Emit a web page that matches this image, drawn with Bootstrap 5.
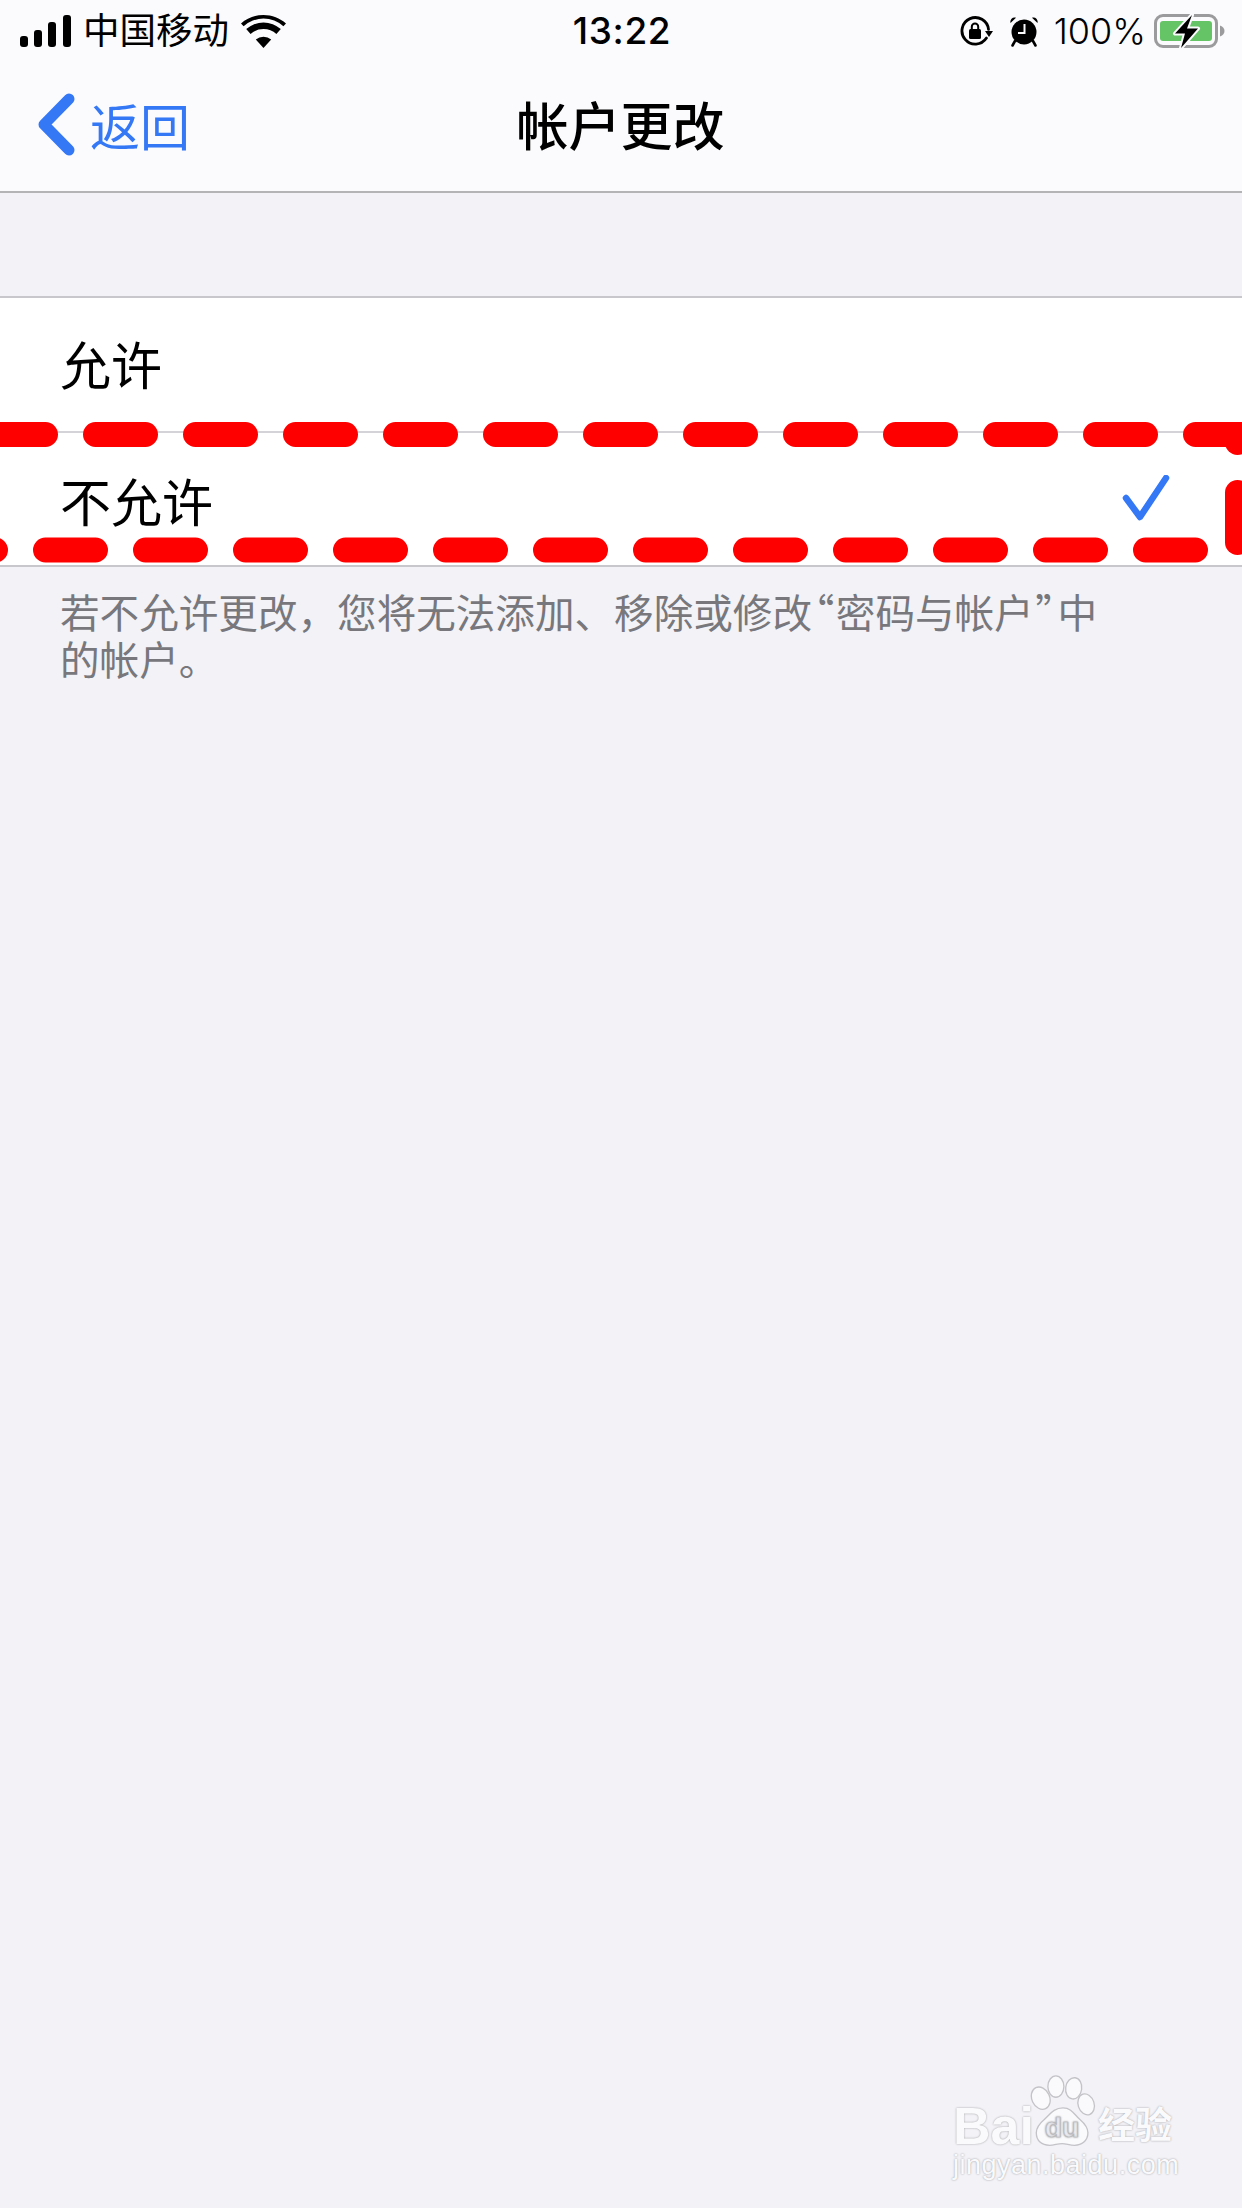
<!DOCTYPE html>
<html lang="zh-CN">
<head>
<meta charset="utf-8">
<title>帐户更改</title>
<link rel="stylesheet" href="https://cdn.jsdelivr.net/npm/bootstrap@5.3.0/dist/css/bootstrap.min.css">
<style>
html,body{height:2208px;overflow:hidden}
body{position:relative;background:#f2f2f7;color:#000;font-family:"Inter","Noto Sans CJK SC",sans-serif}
.cjk{font-family:"Noto Sans CJK SC",sans-serif}
.top-shell{background:#fbfbfd;border-bottom:2px solid #b4b4b7;height:193px}
.status-line{height:62px;padding:0 16px 0 20px}
.status-side{flex:1 1 0}
.carrier{font-size:36.5px;line-height:1;margin:0 12px 0 12px;padding-bottom:4px}
.clock{font-size:37px;font-weight:500;line-height:1;letter-spacing:.6px;padding-right:2px;padding-bottom:1px}
.pct{font-size:36px;line-height:1;margin:0 8px 0 15px;font-weight:300}
.nav-line{display:grid;grid-template-columns:1fr auto 1fr;height:129px;padding-bottom:4px}
.back-link{color:#3478f6;font-size:50px;line-height:1;gap:14px;text-decoration:none;margin-left:38px}
.back-word{padding-bottom:2px}
.nav-title{font-size:52px;font-weight:500;line-height:1;padding:0 1px 2px 0}
.options{margin-top:103px;border-top:2px solid #c8c7cc;border-bottom:2px solid #c8c7cc;background:#fff;border-radius:0}
.option-row{height:133px;padding:0 72px 2px 60px;font-size:51px;line-height:1;border:0;background:#fff;color:#000}
.option-row+.option-row{height:134px;padding-bottom:0}
.option-row+.option-row::before{content:"";position:absolute;top:0;left:48px;right:0;height:2px;background:#d4d4d8}
.row-label{padding-top:5px}
.note-text{margin:20px 0 0;padding:0 60px;font-size:39.6px;line-height:47px;color:#77777c}
.quote-mark{font-feature-settings:"palt" 1;margin:0 2px}
.marker{position:absolute;top:0;left:0;pointer-events:none}
.mark-stamp{position:absolute;left:950px;top:2072px;width:235px;height:115px;color:#fafafd;text-shadow:0 0 2px #999}
.stamp-bai{position:absolute;left:3px;top:28px;font:700 52px/1 "Liberation Sans",sans-serif}
.stamp-jing{position:absolute;left:3px;top:80px;font:400 27px/1 "Liberation Sans",sans-serif;letter-spacing:.5px}
.stamp-cn{position:absolute;left:148px;top:33px;font:700 37px/1 "Noto Sans CJK SC",sans-serif}
.stamp-paw{position:absolute;left:80px;top:3px}
</style>
</head>
<body>
<header class="top-shell">
  <div class="status-line d-flex align-items-center">
    <div class="status-side d-flex align-items-center">
      <svg width="51" height="32" viewBox="0 0 51 32" aria-hidden="true"><rect x="0" y="21" width="8" height="11" rx="3"/><rect x="14" y="15" width="8" height="17" rx="3"/><rect x="28" y="7" width="8" height="25" rx="3"/><rect x="43" y="0" width="8" height="32" rx="3"/></svg>
      <span class="carrier cjk">中国移动</span>
      <svg width="45" height="33" viewBox="0 0 45 33" aria-hidden="true"><path d="M22.500 33 14.800 24.600a11.500 11.500 0 0 1 15.400 0Z"/><path d="M9.600 18.900a19.200 19.200 0 0 1 25.800 0l4.400-4.800a25.800 25.800 0 0 0-34.600 0Z"/><path d="M0 8.500C6 3.200 14 0 22.500 0S39 3.200 45 8.500l-2.600 2.800a29.600 29.600 0 0 0-39.800 0Z"/></svg>
    </div>
    <div class="clock">13:22</div>
    <div class="status-side d-flex align-items-center justify-content-end">
      <svg width="33" height="30" viewBox="0 0 33 30" aria-hidden="true"><path d="M27.500 20A13.300 13.300 0 1 1 28 11" fill="none" stroke="#000" stroke-width="2.800" stroke-linecap="round" transform="rotate(10 15 15)"/><path d="M25 15h8l-4 6Z"/><rect x="9" y="13" width="12" height="10" rx="1.500"/><path d="M11.800 13.500v-2.800a3.200 3.200 0 0 1 6.400 0v2.800" fill="none" stroke="#000" stroke-width="2"/></svg>
      <svg class="ms-3" width="30" height="31" viewBox="0 0 30 31" aria-hidden="true"><circle cx="15" cy="16" r="12.500"/><path d="M1.500 7 7 1.800c-3-1.600-6.500 1.800-5.500 5.200ZM28.500 7 23 1.800c3-1.600 6.500 1.800 5.500 5.200Z"/><path d="M6 25 3.500 29.500M24 25l2.500 4.500" stroke="#000" stroke-width="2.600" stroke-linecap="round"/><path d="M15.500 8v9H9" fill="none" stroke="#fbfbfd" stroke-width="2"/></svg>
      <span class="pct">100%</span>
      <svg width="72" height="34" viewBox="0 0 72 34" aria-hidden="true"><rect x="1.500" y="1.500" width="61" height="31" rx="7.500" fill="none" stroke="#9b9b9d" stroke-width="3"/><rect x="6" y="7" width="52" height="20" rx="3" fill="#65c466"/><path d="M66 11.500c3 1 4.500 3 4.500 5.500s-1.500 4.500-4.500 5.500Z" fill="#9b9b9d"/><path d="M38 1 21 19.500h10L27 34 44 14.500H33Z" stroke="#fbfbfd" stroke-width="4" stroke-linejoin="round" paint-order="stroke"/></svg>
    </div>
  </div>
  <div class="nav-line align-items-center">
    <a class="back-link d-flex align-items-center cjk" href="#">
      <svg width="38" height="63" viewBox="0 0 38 63" aria-hidden="true"><path d="M31 6 6 31.500 31 57" fill="none" stroke="#3478f6" stroke-width="11" stroke-linecap="round" stroke-linejoin="round"/></svg>
      <span class="back-word">返回</span>
    </a>
    <div class="nav-title cjk">帐户更改</div>
    <div></div>
  </div>
</header>

<main>
  <div class="list-group list-group-flush options cjk">
    <div class="list-group-item option-row d-flex align-items-center">允许</div>
    <div class="list-group-item option-row d-flex align-items-center justify-content-between">
      <span class="row-label">不允许</span>
      <svg width="48" height="46" viewBox="0 0 48 46" aria-hidden="true"><path d="M4 23 18 42 44 3" fill="none" stroke="#3478f6" stroke-width="6.500" stroke-linecap="round" stroke-linejoin="round"/></svg>
    </div>
  </div>
  <p class="note-text cjk">若不允许更改&#xFF0C;您将无法添加、移除或修改<span class="quote-mark">&#x201C;</span>密码与帐户<span class="quote-mark">&#x201D;</span>中<br>的帐户。</p>
</main>

<svg class="marker" width="1242" height="600" viewBox="0 0 1242 600" aria-hidden="true">
  <g fill="none" stroke="#ff0000" stroke-width="25" stroke-linecap="round">
    <path d="M-4.500 434.500H1242" stroke-dasharray="50 50"/>
    <path d="M-54.500 550H1195.500" stroke-dasharray="50 50"/>
    <path d="M1237.500 492.500V542.500"/>
    <path d="M1237.500 434.500V442.500"/>
  </g>
</svg>

<div class="mark-stamp">
  <span class="stamp-bai">Bai</span>
  <svg class="stamp-paw" width="66" height="73" viewBox="0 0 74 82" aria-hidden="true">
    <g fill="#fafafd" stroke="#c4c4c8" stroke-width="1.500">
      <ellipse cx="12" cy="26" rx="10" ry="13" transform="rotate(-25 12 26)"/>
      <ellipse cx="29" cy="13" rx="9" ry="12"/>
      <ellipse cx="49" cy="15" rx="9" ry="12" transform="rotate(8 49 15)"/>
      <ellipse cx="63" cy="33" rx="9" ry="12" transform="rotate(-18 63 33)"/>
      <path d="M37 37c10 0 13 8 19 13 7 6 9 10 9 15 0 9-7 14-15 14-6 0-9-2-14-2s-9 2-14 2c-9 0-15-5-15-14 0-6 3-10 9-15 6-5 10-13 21-13Z"/>
    </g>
    <text x="36" y="70" text-anchor="middle" font-family="Liberation Sans, sans-serif" font-size="32" font-weight="700" fill="#f2f2f7" stroke="#b9b9bd" stroke-width=".8">du</text>
  </svg>
  <span class="stamp-cn">经验</span>
  <span class="stamp-jing">jingyan.baidu.com</span>
</div>
<script src="https://cdn.jsdelivr.net/npm/bootstrap@5.3.0/dist/js/bootstrap.bundle.min.js"></script>
</body>
</html>
